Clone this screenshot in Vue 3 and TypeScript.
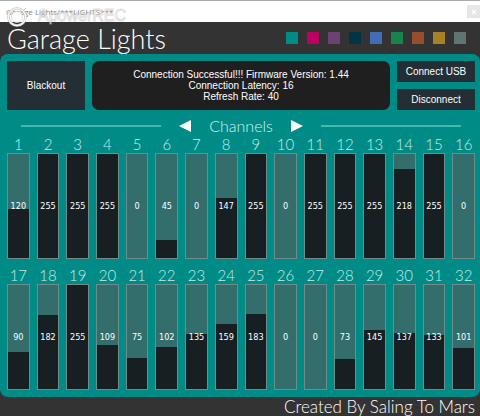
<script setup lang="ts">
import { ref } from 'vue'

interface Swatch { name: string; color: string }
interface Channel { id: number; value: number }

const MAX = 255
const swatches: Swatch[] = [
  { name: 'Teal', color: '#008b87' },
  { name: 'Pink', color: '#ba0360' },
  { name: 'Purple', color: '#6c4272' },
  { name: 'Navy', color: '#023543' },
  { name: 'Blue', color: '#426db6' },
  { name: 'Green', color: '#19834d' },
  { name: 'Rust', color: '#984d2c' },
  { name: 'Gold', color: '#a68224' },
  { name: 'Grey', color: '#627472' },
]
const theme = ref(swatches[0].color)

const levels = [
  [120, 255, 255, 255, 0, 45, 0, 147, 255, 0, 255, 255, 255, 218, 255, 0],
  [90, 182, 255, 109, 75, 102, 135, 159, 183, 0, 0, 73, 145, 137, 133, 101],
]
const banks = ref<Channel[][]>(
  levels.map((row, r) => row.map((value, i) => ({ id: r * 16 + i + 1, value }))),
)

function blackout() {
  banks.value.forEach((bank) => bank.forEach((c) => { c.value = 0 }))
}
</script>

<template>
  <div class="window">
    <div class="titlebar">
      <span class="caption">Garage Lights/***LIGHTS***</span>
      <div class="watermark">
        <svg width="21" height="21" viewBox="0 0 21 21" aria-hidden="true">
          <circle cx="10" cy="10" r="8.5" fill="none" stroke="#bdbdbd" stroke-width="2.6" />
          <circle cx="10" cy="10" r="8.5" fill="none" stroke="#f4f4f4" stroke-width="1.6" />
          <circle cx="10" cy="10" r="5.5" fill="#fff" stroke="#cfcfcf" stroke-width="0.6" />
          <path d="M16 4 19 1" stroke="#cfcfcf" stroke-width="1" />
        </svg>
        <span>ApowerREC</span>
      </div>
      <button class="close" aria-label="Close">
        <svg width="6" height="6" viewBox="0 0 6 6" aria-hidden="true">
          <path d="M1 1 5 5M5 1 1 5" stroke="#fff" stroke-width="1.2" />
        </svg>
      </button>
    </div>

    <header class="header">
      <h1>Garage Lights</h1>
      <div class="swatches">
        <button
          v-for="s in swatches"
          :key="s.name"
          class="swatch"
          :aria-label="s.name"
          :style="{ background: s.color }"
          @click="theme = s.color"
        />
      </div>
    </header>

    <main class="panel" :style="{ background: theme }">
      <div class="controls">
        <button class="btn" @click="blackout">Blackout</button>
        <div class="status">
          <p>Connection Successful!!! Firmware Version: 1.44</p>
          <p>Connection Latency: 16</p>
          <p>Refresh Rate: 40</p>
        </div>
        <div class="link">
          <button class="btn">Connect USB</button>
          <button class="btn">Disconnect</button>
        </div>
      </div>

      <div class="pager">
        <span class="rule" />
        <button class="arrow" aria-label="Previous channels">
          <svg width="12" height="12" viewBox="0 0 12 12" aria-hidden="true"><path d="M12 0V12L0 6Z" fill="#fff" /></svg>
        </button>
        <h2>Channels</h2>
        <button class="arrow" aria-label="Next channels">
          <svg width="12" height="12" viewBox="0 0 12 12" aria-hidden="true"><path d="M0 0V12L12 6Z" fill="#fff" /></svg>
        </button>
        <span class="rule" />
      </div>

      <div v-for="(bank, b) in banks" :key="b" class="bank">
        <div v-for="c in bank" :key="c.id" class="channel">
          <label :for="`ch-${c.id}`">{{ c.id }}</label>
          <div class="fader">
            <input
              :id="`ch-${c.id}`"
              v-model.number="c.value"
              type="range"
              min="0"
              :max="MAX"
              :style="{ '--level': `${(c.value / MAX) * 100}%` }"
            />
            <output :for="`ch-${c.id}`">{{ c.value }}</output>
          </div>
        </div>
      </div>
    </main>

    <footer class="footer">Created By Saling To Mars</footer>
  </div>
</template>

<style>
body {
  margin: 0;
  background: #333;
}
</style>

<style scoped>
.window {
  background: #333;
  color: #fff;
  font-family: Lato, "Liberation Sans", sans-serif;
  font-weight: 300;
}
button {
  border: 0;
  padding: 0;
  font: inherit;
  color: inherit;
  cursor: pointer;
}
h1, h2, p {
  margin: 0;
  font-weight: inherit;
}
.titlebar {
  position: relative;
  display: flex;
  align-items: center;
  justify-content: space-between;
  height: 21px;
  padding-left: 6px;
  border-top: 1px solid #aaa;
  background: #fff;
}
.caption {
  font: 8px/12px "Open Sans", sans-serif;
  color: #808080;
}
.watermark {
  position: absolute;
  left: 7px;
  top: 6px;
  display: flex;
  align-items: center;
  gap: 10px;
  font: 16px/18px "Liberation Sans", sans-serif;
  color: rgb(255 255 255 / 0.6);
  -webkit-text-stroke: 1px rgb(190 190 190 / 0.5);
}
.watermark svg {
  flex: none;
}
.watermark span {
  align-self: flex-start;
}
.close {
  display: grid;
  place-items: center;
  width: 13px;
  height: 13px;
  background: #e6e6e6;
}
.header {
  display: flex;
  align-items: center;
  justify-content: space-between;
  height: 32px;
  padding: 0 14px 0 7px;
}
h1 {
  padding-top: 2px;
  font-size: 27px;
  line-height: 32px;
}
.swatches {
  display: flex;
  gap: 9px;
}
.swatch {
  width: 12px;
  height: 12px;
}
.panel {
  padding: 7px 5px 7px 7px;
  border-radius: 8px;
}
.controls {
  display: grid;
  grid-template-columns: 78fr 298fr 78fr;
  gap: 7px;
  height: 49px;
  font: 10px/11px "Liberation Sans", sans-serif;
}
.btn {
  background: #242e35;
}
.status {
  display: flex;
  flex-direction: column;
  justify-content: center;
  border-radius: 7px;
  background: #1f1f1f;
  text-align: center;
}
.link {
  display: grid;
  gap: 7px;
}
.pager {
  display: flex;
  align-items: center;
  gap: 18px;
  height: 24px;
  margin-top: 4px;
  padding: 0 14px;
}
.rule {
  flex: 1;
  height: 2px;
  background: #48b5af;
}
.arrow {
  display: flex;
  background: none;
}
h2 {
  font-size: 16px;
  line-height: 20px;
  color: #d4f1ef;
}
.bank {
  display: grid;
  grid-template-columns: repeat(16, 1fr);
  gap: 7px;
}
.bank + .bank {
  margin-top: 10px;
}
.channel {
  display: grid;
  grid-template-rows: 15px 106px;
}
label {
  font-size: 15px;
  line-height: 12px;
  text-align: center;
  color: #c4ecea;
}
.fader {
  display: grid;
  min-width: 0;
}
.fader > * {
  grid-area: 1 / 1;
}
input {
  appearance: none;
  box-sizing: border-box;
  width: 100%;
  height: 106px;
  min-width: 0;
  margin: 0;
  border: 1px solid #6f8b8a;
  writing-mode: vertical-lr;
  direction: rtl;
  background: linear-gradient(to top, #171f22 var(--level), #336e6c var(--level));
  cursor: pointer;
}
input::-webkit-slider-thumb {
  appearance: none;
  width: 20px;
  height: 1px;
  background: transparent;
}
output {
  place-self: center;
  font: 9px/12px "DejaVu Sans Condensed", "DejaVu Sans", sans-serif;
  pointer-events: none;
}
.footer {
  padding-right: 5px;
  font-size: 17px;
  line-height: 19px;
  text-align: right;
}
</style>
